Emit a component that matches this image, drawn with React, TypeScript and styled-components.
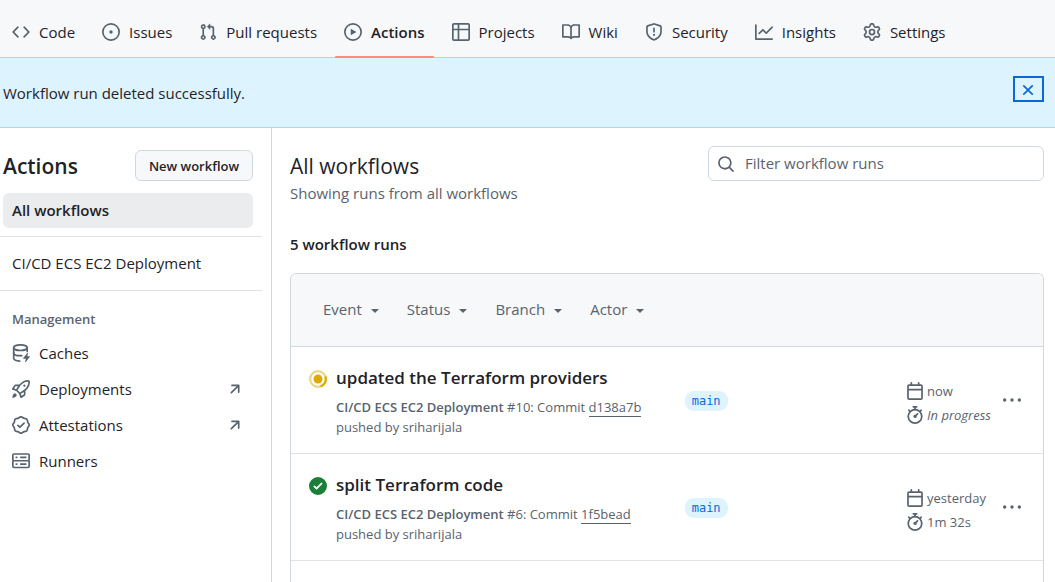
import React from 'react';
import styled, { createGlobalStyle, css } from 'styled-components';

const GlobalStyle = createGlobalStyle`
  *, *::before, *::after { box-sizing: border-box; }
  body {
    margin: 0;
    background: #ffffff;
    color: #1f2328;
    font-family: "Open Sans", "Noto Sans", sans-serif;
    font-size: 15px;
    line-height: 22px;
  }
  h1, h2, h3, p, ul { margin: 0; padding: 0; }
  ul { list-style: none; }
  a { color: inherit; text-decoration: none; }
  button, input { font: inherit; color: inherit; }
`;

/* ---------- icons ---------- */

const paths = {
  code: 'm11.28 3.22 4.25 4.25a.75.75 0 0 1 0 1.06l-4.25 4.25a.749.749 0 0 1-1.275-.326.749.749 0 0 1 .215-.734L13.94 8l-3.72-3.72a.749.749 0 0 1 .326-1.275.749.749 0 0 1 .734.215Zm-6.56 0a.751.751 0 0 1 1.042.018.751.751 0 0 1 .018 1.042L2.06 8l3.72 3.72a.749.749 0 0 1-.326 1.275.749.749 0 0 1-.734-.215L.47 8.53a.75.75 0 0 1 0-1.06Z',
  issue: 'M8 9.5a1.5 1.5 0 1 0 0-3 1.5 1.5 0 0 0 0 3ZM8 0a8 8 0 1 1 0 16A8 8 0 0 1 8 0ZM1.5 8a6.5 6.5 0 1 0 13 0 6.5 6.5 0 0 0-13 0Z',
  pull: 'M1.5 3.25a2.25 2.25 0 1 1 3 2.122v5.256a2.251 2.251 0 1 1-1.5 0V5.372A2.25 2.25 0 0 1 1.5 3.25Zm5.677-.177L9.573.677A.25.25 0 0 1 10 .854V2.5h1A2.5 2.5 0 0 1 13.5 5v5.628a2.251 2.251 0 1 1-1.5 0V5a1 1 0 0 0-1-1h-1v1.646a.25.25 0 0 1-.427.177L7.177 3.427a.25.25 0 0 1 0-.354ZM3.75 2.5a.75.75 0 1 0 0 1.5.75.75 0 0 0 0-1.5Zm0 9.5a.75.75 0 1 0 0 1.5.75.75 0 0 0 0-1.5Zm8.25.75a.75.75 0 1 0 1.5 0 .75.75 0 0 0-1.5 0Z',
  play: 'M8 0a8 8 0 1 1 0 16A8 8 0 0 1 8 0ZM1.5 8a6.5 6.5 0 1 0 13 0 6.5 6.5 0 0 0-13 0Zm4.879-2.773 4.264 2.559a.25.25 0 0 1 0 .428l-4.264 2.559A.25.25 0 0 1 6 10.559V5.442a.25.25 0 0 1 .379-.215Z',
  table: 'M0 1.75C0 .784.784 0 1.75 0h12.5C15.216 0 16 .784 16 1.75v12.5A1.75 1.75 0 0 1 14.25 16H1.75A1.75 1.75 0 0 1 0 14.25ZM6.5 6.5v8h7.75a.25.25 0 0 0 .25-.25V6.5Zm8-1.5V1.75a.25.25 0 0 0-.25-.25H6.5V5Zm-13 1.5v7.75c0 .138.112.25.25.25H5v-8ZM5 5V1.5H1.75a.25.25 0 0 0-.25.25V5Z',
  book: 'M0 1.75A.75.75 0 0 1 .75 1h4.253c1.227 0 2.317.59 3 1.501A3.743 3.743 0 0 1 11.006 1h4.245a.75.75 0 0 1 .75.75v10.5a.75.75 0 0 1-.75.75h-4.507a2.25 2.25 0 0 0-1.591.659l-.622.621a.75.75 0 0 1-1.06 0l-.622-.621A2.25 2.25 0 0 0 5.258 13H.75a.75.75 0 0 1-.75-.75Zm7.251 10.324.004-5.073-.002-2.253A2.25 2.25 0 0 0 5.003 2.5H1.5v9h3.757a3.75 3.75 0 0 1 1.994.574ZM8.755 4.75l-.004 7.322a3.752 3.752 0 0 1 1.992-.572H14.5v-9h-3.495a2.25 2.25 0 0 0-2.25 2.25Z',
  shield: 'M7.467.133a1.748 1.748 0 0 1 1.066 0l5.25 1.68A1.75 1.75 0 0 1 15 3.48V7c0 1.566-.32 3.182-1.303 4.682-.983 1.498-2.585 2.813-5.032 3.855a1.697 1.697 0 0 1-1.33 0c-2.447-1.042-4.049-2.357-5.032-3.855C1.32 10.182 1 8.566 1 7V3.48a1.75 1.75 0 0 1 1.217-1.667Zm.61 1.429a.25.25 0 0 0-.153 0l-5.25 1.68a.25.25 0 0 0-.174.238V7c0 1.358.275 2.666 1.057 3.86.784 1.194 2.121 2.34 4.366 3.297a.196.196 0 0 0 .154 0c2.245-.956 3.582-2.104 4.366-3.298C13.225 9.666 13.5 8.36 13.5 7V3.48a.251.251 0 0 0-.174-.237l-5.25-1.68ZM8.75 4.75v3a.75.75 0 0 1-1.5 0v-3a.75.75 0 0 1 1.5 0ZM9 10.5a1 1 0 1 1-2 0 1 1 0 0 1 2 0Z',
  graph: 'M1.5 1.75V13.5h13.75a.75.75 0 0 1 0 1.5H.75a.75.75 0 0 1-.75-.75V1.75a.75.75 0 0 1 1.5 0Zm14.28 2.53-5.25 5.25a.75.75 0 0 1-1.06 0L7 7.06 4.28 9.78a.751.751 0 0 1-1.042-.018.751.751 0 0 1-.018-1.042l3.25-3.25a.75.75 0 0 1 1.06 0L10 7.94l4.72-4.72a.751.751 0 0 1 1.042.018.751.751 0 0 1 .018 1.042Z',
  gear: 'M8 0a8.2 8.2 0 0 1 .701.031C9.444.095 9.99.645 10.16 1.29l.288 1.107c.018.066.079.158.212.224.231.114.454.243.668.386.123.082.233.09.299.071l1.103-.303c.644-.176 1.392.021 1.82.63.27.385.506.792.704 1.218.315.675.111 1.422-.364 1.891l-.814.806c-.049.048-.098.147-.088.294.016.257.016.515 0 .772-.01.147.038.246.088.294l.814.806c.475.469.679 1.216.364 1.891a7.977 7.977 0 0 1-.704 1.217c-.428.61-1.176.807-1.82.63l-1.102-.302c-.067-.019-.177-.011-.3.071a5.909 5.909 0 0 1-.668.386c-.133.066-.194.158-.211.224l-.29 1.106c-.168.646-.715 1.196-1.458 1.26a8.006 8.006 0 0 1-1.402 0c-.743-.064-1.289-.614-1.458-1.26l-.289-1.106c-.018-.066-.079-.158-.212-.224a5.738 5.738 0 0 1-.668-.386c-.123-.082-.233-.09-.299-.071l-1.103.303c-.644.176-1.392-.021-1.82-.63a8.12 8.12 0 0 1-.704-1.218c-.315-.675-.111-1.422.363-1.891l.815-.806c.05-.048.098-.147.088-.294a6.214 6.214 0 0 1 0-.772c.01-.147-.038-.246-.088-.294l-.815-.806C.635 6.045.431 5.298.746 4.623a7.92 7.92 0 0 1 .704-1.217c.428-.61 1.176-.807 1.82-.63l1.102.302c.067.019.177.011.3-.071.214-.143.437-.272.668-.386.133-.066.194-.158.211-.224l.29-1.106C6.009.645 6.556.095 7.299.03 7.53.01 7.764 0 8 0Zm-.571 1.525c-.036.003-.108.036-.137.146l-.289 1.105c-.147.561-.549.967-.998 1.189-.173.086-.34.183-.5.29-.417.278-.97.423-1.529.27l-1.103-.303c-.109-.03-.175.016-.195.045-.22.312-.412.644-.573.99-.014.031-.021.11.059.19l.815.806c.411.406.562.957.53 1.456a4.709 4.709 0 0 0 0 .582c.032.499-.119 1.05-.53 1.456l-.815.806c-.081.08-.073.159-.059.19.162.346.353.677.573.989.02.03.085.076.195.046l1.102-.303c.56-.153 1.113-.008 1.53.27.161.107.328.204.501.29.447.222.85.629.997 1.189l.289 1.105c.029.109.101.143.137.146a6.6 6.6 0 0 0 1.142 0c.036-.003.108-.036.137-.146l.289-1.105c.147-.561.549-.967.998-1.189.173-.086.34-.183.5-.29.417-.278.97-.423 1.529-.27l1.103.303c.109.029.175-.016.195-.045.22-.313.411-.644.573-.99.014-.031.021-.11-.059-.19l-.815-.806c-.411-.406-.562-.957-.53-1.456a4.709 4.709 0 0 0 0-.582c-.032-.499.119-1.05.53-1.456l.815-.806c.081-.08.073-.159.059-.19a6.464 6.464 0 0 0-.573-.989c-.02-.03-.085-.076-.195-.046l-1.102.303c-.56.153-1.113.008-1.53-.27a4.44 4.44 0 0 0-.501-.29c-.447-.222-.85-.629-.997-1.189l-.289-1.105c-.029-.11-.101-.143-.137-.146a6.6 6.6 0 0 0-1.142 0ZM11 8a3 3 0 1 1-6 0 3 3 0 0 1 6 0ZM9.5 8a1.5 1.5 0 1 0-3.001.001A1.5 1.5 0 0 0 9.5 8Z',
  close: 'M3.72 3.72a.75.75 0 0 1 1.06 0L8 6.94l3.22-3.22a.749.749 0 0 1 1.275.326.749.749 0 0 1-.215.734L9.06 8l3.22 3.22a.749.749 0 0 1-.326 1.275.749.749 0 0 1-.734-.215L8 9.06l-3.22 3.22a.751.751 0 0 1-1.042-.018.751.751 0 0 1-.018-1.042L6.94 8 3.72 4.78a.75.75 0 0 1 0-1.06Z',
  rocket: 'M14.064 0h.186C15.216 0 16 .784 16 1.75v.186a8.752 8.752 0 0 1-2.564 6.186l-.458.459c-.314.314-.641.616-.979.904v3.207c0 .608-.315 1.172-.833 1.49l-2.774 1.707a.749.749 0 0 1-1.11-.418l-.954-3.102a1.214 1.214 0 0 1-.145-.125L3.754 9.816a1.218 1.218 0 0 1-.124-.145L.528 8.717a.749.749 0 0 1-.418-1.11l1.71-2.774A1.748 1.748 0 0 1 3.31 4h3.204c.288-.338.59-.665.904-.979l.459-.458A8.749 8.749 0 0 1 14.064 0ZM8.938 3.623h-.002l-.458.458c-.76.76-1.437 1.598-2.02 2.5l-1.5 2.317 2.143 2.143 2.317-1.5c.902-.583 1.74-1.26 2.499-2.02l.459-.458a7.25 7.25 0 0 0 2.123-5.127V1.75a.25.25 0 0 0-.25-.25h-.186a7.249 7.249 0 0 0-5.125 2.123ZM3.56 14.56c-.732.732-2.334 1.045-3.005 1.148a.234.234 0 0 1-.201-.064.234.234 0 0 1-.064-.201c.103-.671.416-2.273 1.15-3.003a1.502 1.502 0 1 1 2.12 2.12Zm6.94-3.935c-.088.06-.177.118-.266.175l-2.35 1.521.548 1.783 1.949-1.2a.25.25 0 0 0 .119-.213ZM3.678 8.116 5.2 5.766c.058-.09.117-.178.176-.266H3.309a.25.25 0 0 0-.213.119l-1.2 1.95ZM12 5a1 1 0 1 1-2 0 1 1 0 0 1 2 0Z',
  verified: 'm9.585.52.929.68c.153.112.331.186.518.215l1.138.175a2.678 2.678 0 0 1 2.24 2.24l.174 1.139c.029.187.103.365.215.518l.68.928a2.677 2.677 0 0 1 0 3.17l-.68.928a1.174 1.174 0 0 0-.215.518l-.175 1.138a2.678 2.678 0 0 1-2.241 2.241l-1.138.175a1.17 1.17 0 0 0-.518.215l-.928.68a2.677 2.677 0 0 1-3.17 0l-.928-.68a1.174 1.174 0 0 0-.518-.215L3.83 14.41a2.678 2.678 0 0 1-2.24-2.24l-.175-1.138a1.17 1.17 0 0 0-.215-.518l-.68-.928a2.677 2.677 0 0 1 0-3.17l.68-.928c.112-.153.186-.331.215-.518l.175-1.14a2.678 2.678 0 0 1 2.24-2.24l1.139-.175c.187-.029.365-.103.518-.215l.928-.68a2.677 2.677 0 0 1 3.17 0ZM7.303 1.728l-.927.68a2.67 2.67 0 0 1-1.18.489l-1.137.174a1.179 1.179 0 0 0-.987.987l-.174 1.136a2.677 2.677 0 0 1-.489 1.18l-.68.928a1.18 1.18 0 0 0 0 1.394l.68.927c.256.348.424.753.489 1.18l.174 1.137c.078.509.478.909.987.987l1.136.174a2.67 2.67 0 0 1 1.18.489l.928.68c.414.305.979.305 1.394 0l.927-.68a2.67 2.67 0 0 1 1.18-.489l1.137-.174a1.18 1.18 0 0 0 .987-.987l.174-1.136a2.67 2.67 0 0 1 .489-1.18l.68-.928a1.176 1.176 0 0 0 0-1.394l-.68-.927a2.686 2.686 0 0 1-.489-1.18l-.174-1.137a1.179 1.179 0 0 0-.987-.987l-1.136-.174a2.677 2.677 0 0 1-1.18-.489l-.928-.68a1.176 1.176 0 0 0-1.394 0ZM11.28 6.78l-3.75 3.75a.75.75 0 0 1-1.06 0L4.72 8.78a.751.751 0 0 1 .018-1.042.751.751 0 0 1 1.042-.018L7 8.94l3.22-3.22a.751.751 0 0 1 1.042.018.751.751 0 0 1 .018 1.042Z',
  server: 'M1.75 1h12.5c.966 0 1.75.784 1.75 1.75v4c0 .372-.116.717-.314 1 .198.283.314.628.314 1v4a1.75 1.75 0 0 1-1.75 1.75H1.75A1.75 1.75 0 0 1 0 12.75v-4c0-.358.109-.707.314-1a1.739 1.739 0 0 1-.314-1v-4C0 1.784.784 1 1.75 1ZM1.5 2.75v4c0 .138.112.25.25.25h12.5a.25.25 0 0 0 .25-.25v-4a.25.25 0 0 0-.25-.25H1.75a.25.25 0 0 0-.25.25Zm.25 5.75a.25.25 0 0 0-.25.25v4c0 .138.112.25.25.25h12.5a.25.25 0 0 0 .25-.25v-4a.25.25 0 0 0-.25-.25ZM7 4.75A.75.75 0 0 1 7.75 4h4.5a.75.75 0 0 1 0 1.5h-4.5A.75.75 0 0 1 7 4.75ZM7.75 10h4.5a.75.75 0 0 1 0 1.5h-4.5a.75.75 0 0 1 0-1.5ZM3 4.75A.75.75 0 0 1 3.75 4h.5a.75.75 0 0 1 0 1.5h-.5A.75.75 0 0 1 3 4.75ZM3.75 10h.5a.75.75 0 0 1 0 1.5h-.5a.75.75 0 0 1 0-1.5Z',
  arrow: 'M4.53 4.75A.75.75 0 0 1 5.28 4h6.01a.75.75 0 0 1 .75.75v6.01a.75.75 0 0 1-1.5 0v-4.2l-5.26 5.261a.749.749 0 0 1-1.275-.326.749.749 0 0 1 .215-.734L9.48 5.5h-4.2a.75.75 0 0 1-.75-.75Z',
  search: 'M10.68 11.74a6 6 0 0 1-7.922-8.982 6 6 0 0 1 8.982 7.922l3.04 3.04a.749.749 0 0 1-.326 1.275.749.749 0 0 1-.734-.215ZM11.5 7a4.499 4.499 0 1 0-8.997 0A4.499 4.499 0 0 0 11.5 7Z',
  calendar: 'M4.75 0a.75.75 0 0 1 .75.75V2h5V.75a.75.75 0 0 1 1.5 0V2h1.25c.966 0 1.75.784 1.75 1.75v10.5A1.75 1.75 0 0 1 13.25 16H2.75A1.75 1.75 0 0 1 1 14.25V3.75C1 2.784 1.784 2 2.75 2H4V.75A.75.75 0 0 1 4.75 0ZM2.5 7.5v6.75c0 .138.112.25.25.25h10.5a.25.25 0 0 0 .25-.25V7.5Zm10.75-4H2.75a.25.25 0 0 0-.25.25V6h11V3.75a.25.25 0 0 0-.25-.25Z',
  stopwatch: 'M5.75.75A.75.75 0 0 1 6.5 0h3a.75.75 0 0 1 0 1.5h-.75v1l-.001.041a6.724 6.724 0 0 1 3.464 1.435l.007-.006.75-.75a.749.749 0 0 1 1.275.326.749.749 0 0 1-.215.734l-.75.75-.006.007a6.75 6.75 0 1 1-10.548 0L2.72 5.03l-.75-.75a.751.751 0 0 1 .018-1.042.751.751 0 0 1 1.042-.018l.75.75.007.006A6.72 6.72 0 0 1 7.25 2.541V1.5H6.5a.75.75 0 0 1-.75-.75ZM8 14.5a5.25 5.25 0 1 0-.001-10.501A5.25 5.25 0 0 0 8 14.5Zm.389-6.7 1.33-1.33a.75.75 0 1 1 1.061 1.06L9.45 8.861A1.503 1.503 0 0 1 8 10.75a1.499 1.499 0 1 1 .389-2.95Z',
  kebab: 'M8 9.5a1.5 1.5 0 1 0 0-3 1.5 1.5 0 0 0 0 3ZM1.5 9.5a1.5 1.5 0 1 0 0-3 1.5 1.5 0 0 0 0 3Zm13 0a1.5 1.5 0 1 0 0-3 1.5 1.5 0 0 0 0 3Z',
  check: 'M8 16A8 8 0 1 1 8 0a8 8 0 0 1 0 16Zm3.78-9.72a.751.751 0 0 0-.018-1.042.751.751 0 0 0-1.042-.018L6.75 9.19 5.28 7.72a.751.751 0 0 0-1.042.018.751.751 0 0 0-.018 1.042l2 2a.75.75 0 0 0 1.06 0Z',
};

type IconName = keyof typeof paths | 'cache';

const Svg = styled.svg<{ $color?: string }>`
  display: block;
  flex: none;
  fill: ${(p) => p.$color ?? '#59636e'};
`;

function Icon({ name, size = 18, color }: { name: IconName; size?: number; color?: string }) {
  return (
    <Svg width={size} height={size} viewBox="0 0 16 16" $color={color} aria-hidden="true">
      {name === 'cache' ? (
        <>
          <g fill="none" stroke="#59636e" strokeWidth="1.5" strokeLinecap="round">
            <ellipse cx="7.5" cy="3.25" rx="6" ry="2.5" />
            <path d="M1.5 3.25v9.3c0 1.5 2.2 2.6 5.4 2.7" />
            <path d="M1.5 7.9c0 1.4 2.4 2.5 5.8 2.5h1.4" />
            <path d="M13.5 3.25v3.5" />
          </g>
          <path d="M13.6 8.1c.3-.3.7 0 .6.4l-.6 2.3h2.1c.3 0 .4.3.2.6l-3.6 4.5c-.3.3-.7.1-.6-.3l.6-2.6h-2.1c-.3 0-.4-.4-.2-.6Z" />
        </>
      ) : (
        <path d={paths[name]} />
      )}
    </Svg>
  );
}

function InProgressIcon() {
  return (
    <svg width="18" height="18" viewBox="0 0 16 16" fill="none" role="img" aria-label="In progress">
      <circle cx="8" cy="8" r="7" stroke="#dbab0a" strokeOpacity="0.5" strokeWidth="2" />
      <circle cx="8" cy="8" r="4" fill="#dbab0a" />
      <path d="M14.6 5.7A7 7 0 0 1 10.3 14.6" stroke="#dbab0a" strokeWidth="2" />
    </svg>
  );
}

const CaretSvg = styled.svg`
  margin-top: 3px;
`;

function Caret() {
  return (
    <CaretSvg width="8" height="4" viewBox="0 0 8 4" aria-hidden="true">
      <path d="M0 0h8L4 4Z" fill="#59636e" />
    </CaretSvg>
  );
}

/* ---------- page ---------- */

const Page = styled.div`
  display: flex;
  flex-direction: column;
  min-height: 100vh;
`;

const RepoNav = styled.nav`
  display: flex;
  gap: 9px;
  height: 57px;
  padding: 7px 3px 0;
  background: #f6f8fa;
`;

const NavItem = styled.a<{ $active?: boolean }>`
  position: relative;
  display: flex;
  align-items: center;
  gap: 9px;
  padding: 0 9px 1px;
  white-space: nowrap;
  ${(p) =>
    p.$active &&
    css`
      font-weight: 600;
      &::after {
        content: '';
        position: absolute;
        left: 0;
        right: 0;
        bottom: -1px;
        height: 2px;
        border-radius: 2px;
        background: #fd8c73;
      }
    `}
`;

const Flash = styled.div`
  display: flex;
  justify-content: space-between;
  align-items: flex-start;
  padding: 18px 11px 23px 3px;
  background: #ddf4ff;
  border-top: 1px solid #a6d8ff;
  border-bottom: 1px solid #a6d8ff;
`;

const FlashText = styled.p`
  padding-top: 6px;
`;

const CloseButton = styled.button`
  display: grid;
  place-items: center;
  width: 31px;
  height: 26px;
  padding: 1px 1px 0 0;
  background: none;
  border: 2px solid #0969da;
`;

const Body = styled.div`
  flex: 1;
  display: flex;
`;

/* ---------- sidebar ---------- */

const Sidebar = styled.aside`
  flex: none;
  width: 272px;
  padding-top: 22px;
  border-right: 1px solid #d1d9e0;
`;

const SidebarHead = styled.div`
  display: flex;
  align-items: center;
  justify-content: space-between;
  padding: 0 18px 0 3px;
`;

const SidebarTitle = styled.h2`
  font-size: 21px;
  line-height: 30px;
  font-weight: 600;
`;

const NewButton = styled.button`
  height: 31px;
  padding: 0 13px;
  font-size: 13px;
  font-weight: 600;
  background: #f6f8fa;
  border: 1px solid #d1d9e0;
  border-radius: 6px;
`;

const SideList = styled.ul`
  display: flex;
  flex-direction: column;
  gap: 1px;
  padding: 0 18px 0 3px;
`;

const SideSection = styled.div<{ $top: number; $bottom: number }>`
  margin-right: 9px;
  padding: ${(p) => p.$top}px 0 ${(p) => p.$bottom}px;
  border-bottom: 1px solid #dfe3e8;
  ${SideList} { padding-right: 9px; }
`;

const SideLink = styled.a<{ $active?: boolean }>`
  display: flex;
  align-items: center;
  gap: 9px;
  height: 35px;
  padding: 0 9px 1px;
  border-radius: 6px;
  font-weight: ${(p) => (p.$active ? 600 : 400)};
  background: ${(p) => (p.$active ? '#ebecee' : 'transparent')};
`;

const SideLabel = styled.span`
  flex: 1;
`;

const GroupTitle = styled.h3`
  padding: 18px 12px 7px;
  font-size: 13px;
  line-height: 20px;
  font-weight: 600;
  color: #59636e;
`;

/* ---------- main ---------- */

const Main = styled.main`
  flex: 1;
  min-width: 0;
  display: flex;
  flex-direction: column;
  padding: 18px 11px 0 18px;
`;

const MainHead = styled.div`
  display: flex;
  justify-content: space-between;
  align-items: flex-start;
`;

const Title = styled.h1`
  padding: 5px 0 1px;
  font-size: 21px;
  line-height: 30px;
  font-weight: 400;
`;

const Subtitle = styled.p`
  color: #59636e;
`;

const SearchBox = styled.label`
  display: flex;
  align-items: center;
  gap: 10px;
  width: 336px;
  height: 35px;
  padding: 0 8px;
  border: 1px solid #d1d9e0;
  border-radius: 6px;
`;

const SearchInput = styled.input`
  flex: 1;
  min-width: 0;
  padding: 0 0 2px;
  border: 0;
  outline: 0;
  background: none;
  &::placeholder { color: #59636e; opacity: 1; }
`;

const Count = styled.h3`
  padding: 29px 0 18px;
  font-size: 15px;
  line-height: 22px;
  font-weight: 600;
`;

const RunsBox = styled.section`
  flex: 1;
  border: 1px solid #d1d9e0;
  border-bottom: 0;
  border-radius: 6px 6px 0 0;
`;

const Filters = styled.div`
  display: flex;
  align-items: center;
  gap: 28px;
  height: 73px;
  padding: 0 32px 2px;
  background: #f6f8fa;
  border-bottom: 1px solid #d1d9e0;
  border-radius: 5px 5px 0 0;
`;

const FilterButton = styled.button`
  display: flex;
  align-items: center;
  gap: 9px;
  padding: 0;
  background: none;
  border: 0;
  color: #59636e;
`;

const Run = styled.li`
  display: grid;
  grid-template-columns: 18px 8fr 5fr 88px 18px;
  column-gap: 9px;
  height: 107px;
  padding: 18px 22px 18px 18px;
  border-bottom: 1px solid #dfe3e8;
`;

const Status = styled.div`
  padding-top: 5px;
`;

const RunTitle = styled.a`
  display: block;
  font-size: 17px;
  line-height: 26px;
  font-weight: 600;
`;

const RunMeta = styled.div`
  padding-top: 6px;
  font-size: 13px;
  line-height: 20px;
  color: #59636e;
`;

const Workflow = styled.span`
  font-weight: 600;
`;

const Commit = styled.a`
  border-bottom: 1px solid #59636e;
`;

const Pusher = styled.div``;

const Branch = styled.a`
  justify-self: start;
  align-self: start;
  margin-top: 26px;
  padding: 0 7px;
  border-radius: 9px;
  background: #ddf4ff;
  color: #0969da;
  font-family: "DejaVu Sans Mono", monospace;
  font-size: 12px;
  line-height: 20px;
`;

const Times = styled.div`
  padding-top: 14px;
  font-size: 13px;
  line-height: 24px;
  color: #59636e;
  white-space: nowrap;
`;

const TimeLine = styled.div<{ $italic?: boolean }>`
  display: flex;
  align-items: center;
  gap: 3px;
  font-style: ${(p) => (p.$italic ? 'italic' : 'normal')};
`;

const MenuButton = styled.button`
  align-self: start;
  margin-top: 26px;
  padding: 0;
  background: none;
  border: 0;
`;

const tabs: { icon: IconName; label: string }[] = [
  { icon: 'code', label: 'Code' },
  { icon: 'issue', label: 'Issues' },
  { icon: 'pull', label: 'Pull requests' },
  { icon: 'play', label: 'Actions' },
  { icon: 'table', label: 'Projects' },
  { icon: 'book', label: 'Wiki' },
  { icon: 'shield', label: 'Security' },
  { icon: 'graph', label: 'Insights' },
  { icon: 'gear', label: 'Settings' },
];

const management: { icon: IconName; label: string; external?: boolean }[] = [
  { icon: 'cache', label: 'Caches' },
  { icon: 'rocket', label: 'Deployments', external: true },
  { icon: 'verified', label: 'Attestations', external: true },
  { icon: 'server', label: 'Runners' },
];

const runs = [
  { title: 'updated the Terraform providers', number: 10, commit: 'd138a7b', when: 'now', duration: 'In progress', running: true },
  { title: 'split Terraform code', number: 6, commit: '1f5bead', when: 'yesterday', duration: '1m 32s', running: false },
];

export default function App() {
  return (
    <Page>
      <GlobalStyle />
      <RepoNav aria-label="Repository">
        {tabs.map((tab) => (
          <NavItem key={tab.label} href="#" $active={tab.label === 'Actions'}>
            <Icon name={tab.icon} />
            {tab.label}
          </NavItem>
        ))}
      </RepoNav>
      <Flash role="status">
        <FlashText>Workflow run deleted successfully.</FlashText>
        <CloseButton aria-label="Dismiss this message">
          <Icon name="close" color="#0969da" />
        </CloseButton>
      </Flash>
      <Body>
        <Sidebar>
          <SidebarHead>
            <SidebarTitle>Actions</SidebarTitle>
            <NewButton>New workflow</NewButton>
          </SidebarHead>
          <SideSection $top={12} $bottom={8}>
            <SideList>
              <li><SideLink href="#" $active>All workflows</SideLink></li>
            </SideList>
          </SideSection>
          <SideSection $top={9} $bottom={9}>
            <SideList>
              <li><SideLink href="#">CI/CD ECS EC2 Deployment</SideLink></li>
            </SideList>
          </SideSection>
          <GroupTitle>Management</GroupTitle>
          <SideList>
            {management.map((item) => (
              <li key={item.label}>
                <SideLink href="#">
                  <Icon name={item.icon} />
                  <SideLabel>{item.label}</SideLabel>
                  {item.external && <Icon name="arrow" />}
                </SideLink>
              </li>
            ))}
          </SideList>
        </Sidebar>
        <Main>
          <MainHead>
            <div>
              <Title>All workflows</Title>
              <Subtitle>Showing runs from all workflows</Subtitle>
            </div>
            <SearchBox>
              <Icon name="search" />
              <SearchInput type="text" placeholder="Filter workflow runs" aria-label="Filter workflow runs" />
            </SearchBox>
          </MainHead>
          <Count>5 workflow runs</Count>
          <RunsBox>
            <Filters>
              {['Event', 'Status', 'Branch', 'Actor'].map((label) => (
                <FilterButton key={label}>
                  {label}
                  <Caret />
                </FilterButton>
              ))}
            </Filters>
            <ul>
              {runs.map((run) => (
                <Run key={run.commit}>
                  <Status>
                    {run.running ? <InProgressIcon /> : <Icon name="check" color="#1a7f37" />}
                  </Status>
                  <div>
                    <RunTitle href="#">{run.title}</RunTitle>
                    <RunMeta>
                      <Workflow>CI/CD ECS EC2 Deployment</Workflow> #{run.number}: Commit{' '}
                      <Commit href="#">{run.commit}</Commit>
                      <Pusher>pushed by sriharijala</Pusher>
                    </RunMeta>
                  </div>
                  <Branch href="#">main</Branch>
                  <Times>
                    <TimeLine>
                      <Icon name="calendar" />
                      {run.when}
                    </TimeLine>
                    <TimeLine $italic={run.running}>
                      <Icon name="stopwatch" />
                      {run.duration}
                    </TimeLine>
                  </Times>
                  <MenuButton aria-label="Show options">
                    <Icon name="kebab" />
                  </MenuButton>
                </Run>
              ))}
            </ul>
          </RunsBox>
        </Main>
      </Body>
    </Page>
  );
}
